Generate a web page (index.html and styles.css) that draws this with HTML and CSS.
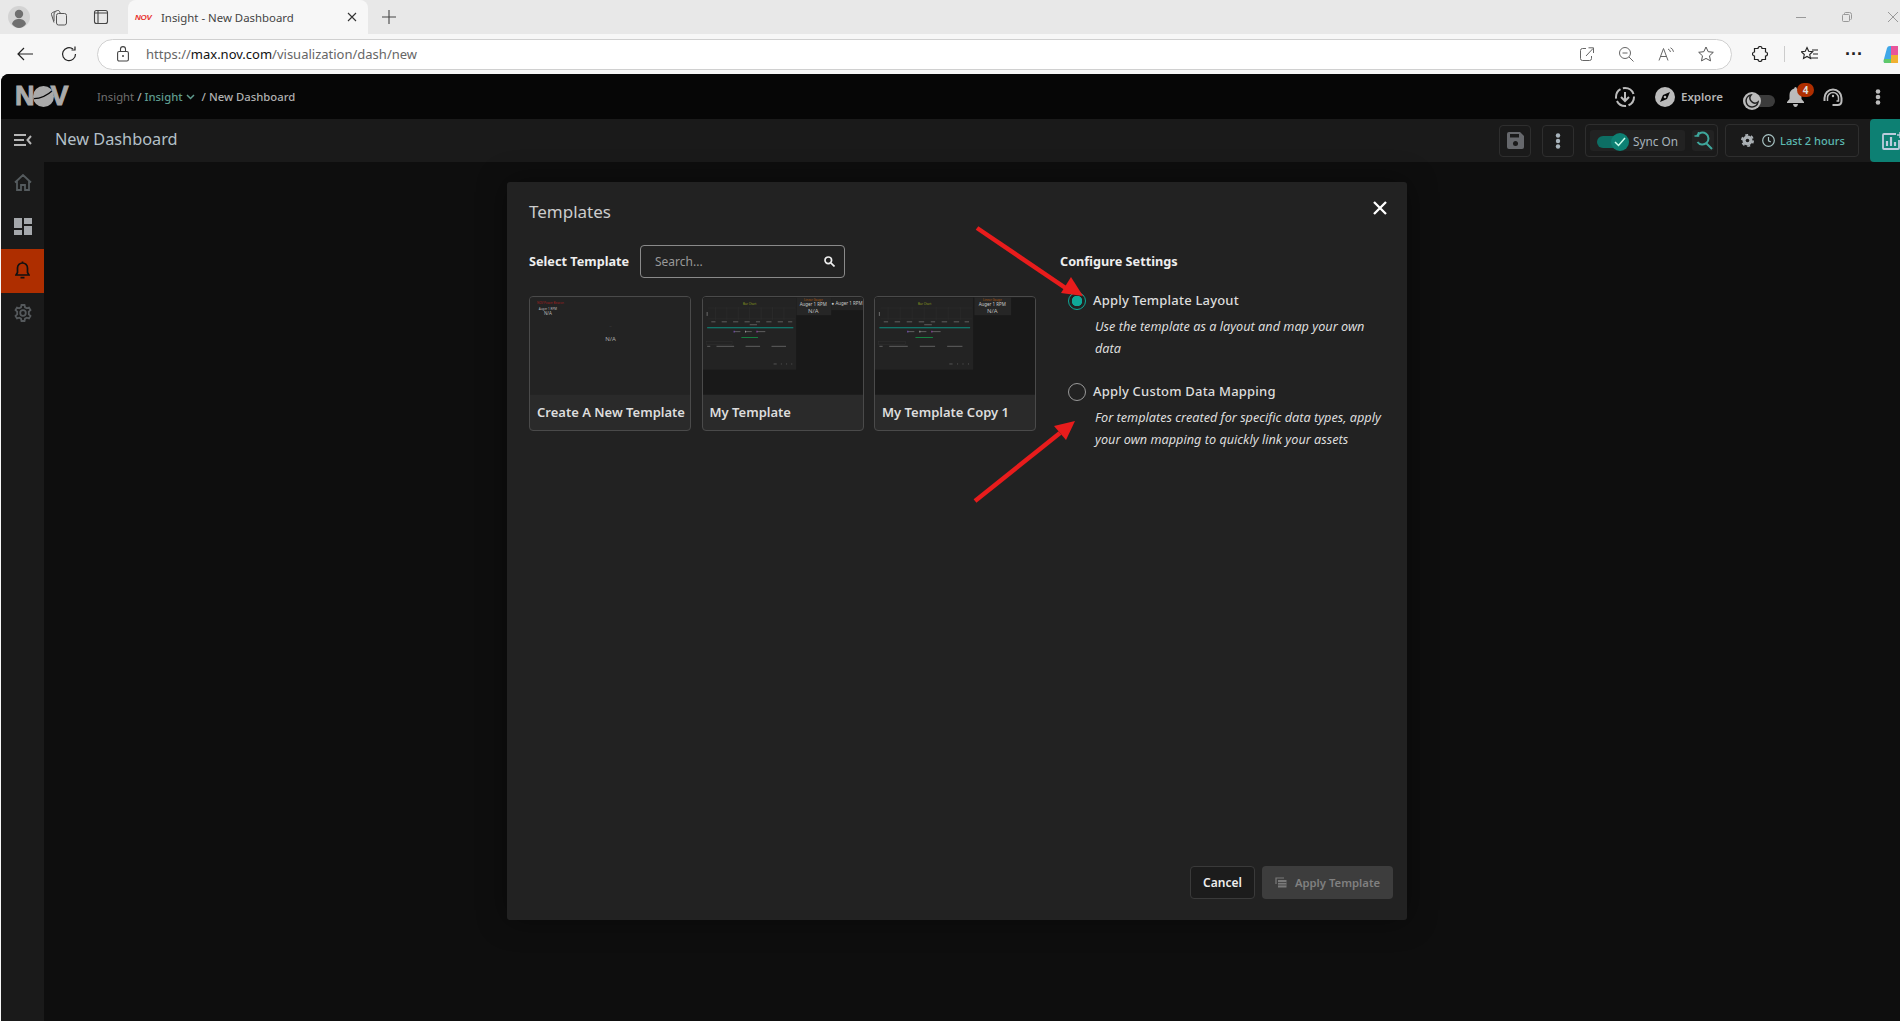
FILE: index.html
```html
<!DOCTYPE html>
<html lang="en">
<head>
    <meta charset="UTF-8">
    <title>Insight - New Dashboard</title>
    <link rel="stylesheet" href="styles.css">
</head>
<body>
    <svg class="defs" width="0" height="0">
        <symbol id="chart-panel" viewBox="0 0 90 74" preserveAspectRatio="none">
            <rect width="90" height="74" fill="#232323"/>
            <path d="M5 11H89M5 22H89M12 10V23M23 10V23M34 10V23M45 10V23M56 10V23M67 10V23M78 10V23" stroke="#2f2f2f" stroke-width=".5"/>
            <path d="M4 15V19" stroke="#888" stroke-width=".7"/>
            <path d="M8 25H12M18 25H23M29 25H34M40 25H45M51 25H55M61 25H66M72 25H77M82 25H86M45 28H52" stroke="#777" stroke-width=".7"/>
            <path d="M4 31H87" stroke="#0d8f80" stroke-width="1"/>
            <path d="M30 35H36M41 35H47M52 35H60" stroke="#777" stroke-width=".7"/>
            <path d="M30 34V36" stroke="#7a4fc0"/><path d="M41 34V36" stroke="#999"/><path d="M52 34V36" stroke="#9a40b0"/>
            <path d="M37 41H53" stroke="#168a45" stroke-width=".9"/>
            <rect x="3" y="45" width="25" height="3" fill="none" stroke="#333" stroke-width=".4"/>
            <path d="M4 50H7M13 50H30M41 50H55M66 50H80" stroke="#777" stroke-width=".7"/>
            <path d="M68 68H71M75 68H76M80 68H81M85 68H86" stroke="#666" stroke-width=".7"/>
        </symbol>
    </svg>

    <div class="tab-strip">
        <div class="strip-left">
            <span class="avatar">
                <svg width="22" height="22" viewBox="0 0 22 22"><circle cx="11" cy="11" r="11" fill="#d3d3d3"/><circle cx="11" cy="8" r="4.2" fill="#6f6f6f"/><path d="M4 18c1-4 4-5 7-5s6 1 7 5c-2 2.400-4.500 4-7 4s-5-1.600-7-4z" fill="#6f6f6f"/></svg>
            </span>
            <svg class="chrome-icon" width="18" height="18" viewBox="0 0 18 18" fill="none" stroke="#555"><rect x="6.500" y="5.500" width="10" height="11.500" rx="2"/><path d="M4 14.500 1.500 6.500q-.3-1.500 1-2l5-2q1.500-.4 2 1L10.500 5.500"/><path d="M4 13V6q0-1.500 1.500-2"/></svg>
            <svg class="chrome-icon" width="16" height="16" viewBox="0 0 16 16" fill="none" stroke="#444" stroke-width="1.100"><rect x="1.500" y="1.500" width="13" height="13" rx="2"/><path d="M5 2v12M2 4h12" /></svg>
        </div>
        <div class="tab">
            <span class="favicon">NOV</span>
            <span class="tab-title">Insight - New Dashboard</span>
            <svg width="10" height="10" viewBox="0 0 10 10" stroke="#333" stroke-width="1.100"><path d="M1 1l8 8M9 1l-8 8"/></svg>
        </div>
        <svg class="new-tab" width="14" height="14" viewBox="0 0 14 14" stroke="#444" stroke-width="1.100"><path d="M7 0v14M0 7h14"/></svg>
        <div class="window-btns">
            <svg width="10" height="10" viewBox="0 0 10 10" stroke="#999"><path d="M0 5.500h10"/></svg>
            <svg width="10" height="10" viewBox="0 0 10 10" fill="none" stroke="#999"><rect x=".5" y="2.500" width="7" height="7" rx="1"/><path d="M2.500 2V1.500q0-1 1-1h4q2 0 2 2v4q0 1-1 1"/></svg>
            <svg width="10" height="10" viewBox="0 0 10 10" stroke="#999"><path d="M0 0l10 10M10 0L0 10"/></svg>
        </div>
    </div>

    <div class="toolbar">
        <svg class="nav-back" width="16" height="14" viewBox="0 0 16 14" fill="none" stroke="#222" stroke-width="1.200"><path d="M16 7H1M7 1L1 7l6 6"/></svg>
        <svg class="nav-reload" width="16" height="16" viewBox="0 0 16 16" fill="none" stroke="#222" stroke-width="1.200"><path d="M14.500 8A6.500 6.500 0 1 1 12 3"/><path d="M14 .5V4h-3.500" /></svg>
        <div class="url-pill">
            <svg class="lock" width="12" height="16" viewBox="0 0 12 16" fill="none" stroke="#444" stroke-width="1.100"><rect x=".6" y="5.500" width="10.800" height="9.500" rx="1.500"/><path d="M3.500 5.500V3q0-2.400 2.500-2.400T8.500 3v2.500"/><circle cx="6" cy="10" r="1" fill="#444" stroke="none"/></svg>
            <span class="url"><span class="url-dim">https://</span>max.nov.com<span class="url-dim">/visualization/dash/new</span></span>
            <div class="url-icons">
                <svg width="14" height="14" viewBox="0 0 14 14" fill="none" stroke="#666"><path d="M6 1.500H2.500q-2 0-2 2v8q0 2 2 2h7q2 0 2-2V9"/><path d="M6 9l7-7.500M8.500.8H13.500V6"/></svg>
                <svg width="16" height="16" viewBox="0 0 16 16" fill="none" stroke="#666"><circle cx="7" cy="7" r="5.500"/><path d="M4.500 7h5M11 11l4.500 4.500"/></svg>
                <svg width="16" height="14" viewBox="0 0 16 14" fill="none" stroke="#666"><path d="M1 13.500L5.500 1.500 10 13.500M2.800 9.500h5.600M10 2q2 .8 2.500 3M12.500 .8q2.500 1 3 4"/></svg>
                <svg width="16" height="16" viewBox="0 0 16 16" fill="none" stroke="#555"><path d="M8 1l2.200 4.700 5.100.6-3.800 3.500 1 5.100L8 12.400l-4.500 2.500 1-5.100L.7 6.300l5.100-.6z"/></svg>
            </div>
        </div>
        <svg class="ext-icon" width="16" height="16" viewBox="0 0 16 16" fill="none" stroke="#222" stroke-width="1.200"><path d="M6 2.500a2 2 0 0 1 4 0H13.500V6a2 2 0 0 1 0 4v3.500H10a2 2 0 0 1-4 0H2.500V10a2 2 0 0 1 0-4V2.500z"/></svg>
        <span class="tool-sep"></span>
        <svg class="fav-icon" width="17" height="16" viewBox="0 0 17 16" fill="none" stroke="#222" stroke-width="1.100"><path d="M6 1.500l1.700 3.700 4 .5-3 2.800.8 4L6 10.500l-3.500 2 .8-4-3-2.800 4-.5zM11 4h6M12 8h5M10 12h7"/></svg>
        <span class="more-dots">···</span>
        <svg class="copilot" width="16" height="18" viewBox="0 0 16 18"><path d="M2 14L5 3q.5-2 3-2h8v17H3q-2 0-1-4z" fill="#3fa7e8"/><path d="M9 1h7v9H9z" fill="#e8559a"/><path d="M2 14h7v4H3q-2 0-1-4z" fill="#5fc96a"/><path d="M9 10h7v8H9z" fill="#f0b030"/></svg>
    </div>

    <div class="app">
        <header class="app-header">
            <div class="logo">
                <span>N</span>
                <svg width="21" height="21" viewBox="0 0 20 20"><circle cx="10" cy="10" r="10" fill="#aaa"/><path d="M1 12Q10 12 19 4" fill="none" stroke="#060606" stroke-width="1.200"/></svg>
                <span class="logo-v">V</span>
            </div>
            <nav class="breadcrumb">
                <span class="crumb-dim">Insight</span>
                <span>/</span>
                <span class="crumb-teal">Insight</span>
                <svg width="9" height="6" viewBox="0 0 9 6" fill="none" stroke="#5f9c8f" stroke-width="1.500"><path d="M1 1l3.500 3.500L8 1"/></svg>
                <span class="crumb-sep">/</span>
                <span>New Dashboard</span>
            </nav>
            <div class="header-right">
                <svg class="h-download" width="20" height="20" viewBox="0 0 20 20" fill="none" stroke="#bbb" stroke-width="2"><path d="M10 1a9 9 0 0 1 9 9 9 9 0 0 1-9 9 9 9 0 0 1-9-9 9 9 0 0 1 9-9z" stroke-dasharray="11 2.500"/><path d="M10 5v9M6 10l4 4 4-4"/></svg>
                <svg class="h-compass" width="20" height="20" viewBox="0 0 20 20"><circle cx="10" cy="10" r="10" fill="#bbb"/><path d="M15 5l-3 7-7 3 3-7z" fill="#060606"/><circle cx="10" cy="10" r="1.300" fill="#bbb"/></svg>
                <span class="explore">Explore</span>
                <div class="moon-toggle">
                    <span class="moon-knob">
                        <svg width="14" height="14" viewBox="0 0 14 14" fill="none" stroke="#222" stroke-width="1.500"><path d="M6 1a6 6 0 1 0 7 7 5 5 0 0 1-7-7z"/></svg>
                    </span>
                </div>
                <div class="bell-wrap">
                    <svg width="17" height="20" viewBox="0 0 17 20" fill="#bbb"><path d="M8.500 0q1.300 0 1.300 1.500C13 2.300 14.500 5 14.500 8v4l2.500 3v1H0v-1l2.500-3V8c0-3 1.500-5.700 4.700-6.500Q7.200 0 8.500 0zM6 17h5q-.5 3-2.500 3T6 17z"/></svg>
                    <span class="badge">4</span>
                </div>
                <svg class="h-headset" width="20" height="18" viewBox="0 0 20 18" fill="none" stroke="#bbb" stroke-width="2"><path d="M1.500 13V10a8.500 8.500 0 0 1 17 0v3q0 4-4 4h-5"/><path d="M4.500 13V10a5.500 5.500 0 0 1 11 0v3h-2" stroke-width="1.500"/><circle cx="10" cy="8" r="1.200" fill="#bbb" stroke="none"/></svg>
                <svg class="h-dots" width="6" height="16" viewBox="0 0 6 16" fill="#bbb"><circle cx="3" cy="2.500" r="2.300"/><circle cx="3" cy="8" r="2.300"/><circle cx="3" cy="13.500" r="2.300"/></svg>
            </div>
        </header>

        <div class="sub-header">
            <div class="menu-toggle">
                <svg width="18" height="12" viewBox="0 0 18 12" fill="none" stroke="#b5b5b5" stroke-width="2"><path d="M0 1h12M0 6h10M0 11h12M17 2l-3.500 4 3.500 4"/></svg>
            </div>
            <h2 class="page-title">New Dashboard</h2>
            <div class="sub-right">
                <button class="tool-btn btn-save">
                    <svg width="17" height="17" viewBox="0 0 17 17" fill="#66686c"><path d="M2 0h11l4 4v11q0 2-2 2H2q-2 0-2-2V2q0-2 2-2z"/><rect x="3" y="2" width="9" height="3.500" fill="#1a1a1a"/><circle cx="8.500" cy="11.500" r="2.500" fill="#1a1a1a"/></svg>
                </button>
                <button class="tool-btn btn-more">
                    <svg width="6" height="16" viewBox="0 0 6 16" fill="#a8b4bc"><circle cx="3" cy="2.500" r="2.200"/><circle cx="3" cy="8" r="2.200"/><circle cx="3" cy="13.500" r="2.200"/></svg>
                </button>
                <div class="sync-group">
                    <div class="sync-pill">
                        <div class="sync-toggle">
                            <span class="sync-knob">
                                <svg width="12" height="10" viewBox="0 0 12 10" fill="none" stroke="#cfe" stroke-width="1.500"><path d="M1 5l3.500 3.500L11 1"/></svg>
                            </span>
                        </div>
                        <span class="sync-label">Sync On</span>
                    </div>
                    <div class="sync-search">
                        <svg width="19" height="19" viewBox="0 0 19 19" fill="none" stroke="#3fa79c" stroke-width="2"><path d="M3 5a6 6 0 1 1 .500 6M12 12l6 6"/><path d="M.5 5H4.500V1" stroke-width="1.500"/></svg>
                    </div>
                </div>
                <div class="time-group">
                    <svg width="13" height="13" viewBox="0 0 13 13" fill="#aab0b4"><circle cx="6.500" cy="6.500" r="5"/><circle cx="6.500" cy="6.500" r="5.600" fill="none" stroke="#aab0b4" stroke-width="1.800" stroke-dasharray="2.900 2.960"/><circle cx="6.500" cy="6.500" r="1.800" fill="#1a1a1a"/></svg>
                    <svg class="clock" width="13" height="13" viewBox="0 0 13 13" fill="none" stroke="#a8c4c4" stroke-width="1.200"><circle cx="6.500" cy="6.500" r="5.800"/><path d="M6.500 3v3.800l2.300 1.200"/></svg>
                    <span class="time-label">Last 2 hours</span>
                </div>
                <button class="chart-btn">
                    <svg width="20" height="18" viewBox="0 0 20 18" fill="none" stroke="#bcd" stroke-width="1.800"><path d="M14 2H2q-1 0-1 1v13q0 1 1 1h14q1 0 1-1V8"/><path d="M5 14V9M9 14V5M13 14v-4" stroke-width="2.200"/><path d="M18 0v6M15 3h5" stroke-width="1.500"/></svg>
                </button>
            </div>
        </div>

        <div class="app-body">
            <aside class="sidebar">
                <div class="side-item">
                    <svg width="18" height="17" viewBox="0 0 18 17" fill="none" stroke="#555b5e" stroke-width="1.800"><path d="M1 8.500L9 1l8 7.500M3 7v9h4v-5h4v5h4V7"/></svg>
                </div>
                <div class="side-item">
                    <svg width="18" height="17" viewBox="0 0 18 17"><path d="M0 0h8v10H0z" fill="#a5a8ac"/><path d="M10 0h8v6h-8z" fill="#a5a8ac"/><path d="M0 12h8v5H0z" fill="#a5a8ac"/><path d="M10 8h8v9h-8z" fill="#a5a8ac"/></svg>
                </div>
                <div class="side-item active">
                    <svg width="15" height="18" viewBox="0 0 15 18" fill="none" stroke="#111" stroke-width="1.700"><path d="M1 14h13l-1.500-2.500V7A5 5 0 0 0 2.500 7v4.500zM7.500 .5v1.500M5.500 16.700h4"/></svg>
                </div>
                <div class="side-item">
                    <svg width="18" height="18" viewBox="0 0 18 18" fill="none" stroke="#55595c" stroke-width="1.800"><circle cx="9" cy="9" r="2.800"/><path d="M7.500 1h3l.5 2.300 1.800 1 2.200-.8 1.500 2.600-1.700 1.600v2.600l1.700 1.600-1.500 2.600-2.200-.8-1.800 1-.5 2.300h-3L7 14.700l-1.800-1-2.200.8-1.500-2.600 1.700-1.600V7.700L1.500 6.100 3 3.500l2.200.8 1.800-1z"/></svg>
                </div>
            </aside>
            <main class="canvas"></main>
        </div>

        <section class="modal">
            <div class="modal-head">
                <h3 class="modal-title">Templates</h3>
                <svg class="modal-close" width="14" height="14" viewBox="0 0 14 14" stroke="#fff" stroke-width="2.300"><path d="M1 1l12 12M13 1L1 13"/></svg>
            </div>
            <div class="modal-content">
                <div class="select-col">
                    <div class="select-row">
                        <label class="select-label">Select Template</label>
                        <div class="search-box">
                            <span class="search-ph">Search...</span>
                            <svg width="11" height="11" viewBox="0 0 11 11" fill="none" stroke="#eee" stroke-width="1.700"><circle cx="4.300" cy="4.300" r="3.300"/><path d="M6.800 6.800L10.500 10.500"/></svg>
                        </div>
                    </div>
                    <div class="card-grid">
                        <div class="card">
                            <svg class="thumb" viewBox="0 0 161 98">
                                <rect width="161" height="98" fill="#232323"/>
                                <text x="7" y="7" class="t-tiny" fill="#a02020">NOV Power Beacon</text>
                                <text x="18" y="13" class="t-tiny" fill="#bbb" text-anchor="middle">Auger 1 RPM</text>
                                <text x="18" y="18" class="t-small" fill="#bbb" text-anchor="middle">N/A</text>
                                <text x="81" y="30" class="t-tiny" fill="#666" text-anchor="middle">--</text>
                                <text x="81" y="44" class="t-mid" fill="#aaa" text-anchor="middle">N/A</text>
                            </svg>
                            <div class="card-name">Create A New Template</div>
                        </div>
                        <div class="card">
                            <svg class="thumb" viewBox="0 0 161 98">
                                <rect width="161" height="98" fill="#191919"/>
                                <use href="#chart-panel" width="94" height="73"/>
                                <text x="47" y="8" class="t-tiny" fill="#8a9a20" text-anchor="middle">Bar Chart</text>
                                <rect x="94" width="35" height="18" fill="#262626"/>
                                <rect x="129" width="32" height="13" fill="#232323"/>
                                <text x="111" y="4" class="t-tiny" fill="#b05a10" text-anchor="middle">Linear Gauge</text>
                                <text x="111" y="9" class="t-small" fill="#ccc" text-anchor="middle">Auger 1 RPM</text>
                                <text x="111" y="16" class="t-mid" fill="#bbb" text-anchor="middle">N/A</text>
                                <text x="145" y="8" class="t-small" fill="#ccc" text-anchor="middle">● Auger 1 RPM</text>
                            </svg>
                            <div class="card-name">My Template</div>
                        </div>
                        <div class="card">
                            <svg class="thumb" viewBox="0 0 161 98">
                                <rect width="161" height="98" fill="#191919"/>
                                <use href="#chart-panel" width="99" height="73"/>
                                <text x="50" y="8" class="t-tiny" fill="#8a9a20" text-anchor="middle">Bar Chart</text>
                                <rect x="100" width="37" height="18" fill="#262626"/>
                                <text x="118" y="4" class="t-tiny" fill="#b05a10" text-anchor="middle">Linear Gauge</text>
                                <text x="118" y="9" class="t-small" fill="#ccc" text-anchor="middle">Auger 1 RPM</text>
                                <text x="118" y="16" class="t-mid" fill="#bbb" text-anchor="middle">N/A</text>
                            </svg>
                            <div class="card-name">My Template Copy 1</div>
                        </div>
                    </div>
                </div>
                <div class="config-col">
                    <h4 class="config-title">Configure Settings</h4>
                    <div class="option">
                        <span class="radio checked"></span>
                        <span class="option-label">Apply Template Layout</span>
                    </div>
                    <p class="option-desc">Use the template as a layout and map your own data</p>
                    <div class="option">
                        <span class="radio"></span>
                        <span class="option-label">Apply Custom Data Mapping</span>
                    </div>
                    <p class="option-desc">For templates created for specific data types, apply your own mapping to quickly link your assets</p>
                </div>
            </div>
            <div class="modal-foot">
                <button class="btn-cancel">Cancel</button>
                <button class="btn-apply">
                    <svg width="12" height="11" viewBox="0 0 12 11" fill="none" stroke="#7a7a7a" stroke-width="1.200"><path d="M1 7V1h8"/><rect x="3" y="3" width="8.500" height="7.500" fill="#7a7a7a" stroke="none"/><path d="M3 5.500h8.500M3 8h8.500" stroke="#3d3d3d" stroke-width=".8"/></svg>
                    Apply Template
                </button>
            </div>
        </section>
    </div>

    <!-- annotation arrows, page coordinates -->
    <svg class="arrows" width="1900" height="1021" viewBox="0 0 1900 1021">
        <path d="M977 228L1070 291" stroke="#e81c1c" stroke-width="4.500" fill="none"/>
        <path d="M1083 296L1071 277 1061 293z" fill="#e81c1c"/>
        <path d="M975 501L1060 433" stroke="#e81c1c" stroke-width="4.500" fill="none"/>
        <path d="M1075 421L1054 426 1066 440z" fill="#e81c1c"/>
    </svg>
</body>
</html>
```

FILE: styles.css
```css
* {
    box-sizing: border-box;
}
html, body {
    margin: 0;
    padding: 0;
    height: 1021px;
    overflow: hidden;
}
body {
    font-family: "Noto Sans", sans-serif;
    background-color: #f7f7f7;
    position: relative;
}
h2, h3, h4, p {
    margin: 0;
    font-weight: normal;
}
button {
    font-family: inherit;
    cursor: pointer;
}
svg {
    display: block;
    flex-shrink: 0;
}
.defs {
    position: absolute;
}

/* browser chrome */
.tab-strip {
    height: 34px;
    background-color: #e8e8e8;
    display: flex;
    align-items: center;
}
.strip-left {
    width: 128px;
    display: flex;
    align-items: center;
    padding-left: 8px;
}
.avatar {
    margin-right: 20px;
}
.strip-left .chrome-icon:nth-child(2) {
    margin-right: 25px;
}
.tab {
    width: 240px;
    height: 34px;
    background-color: #f7f7f7;
    border-radius: 8px 8px 0 0;
    display: flex;
    align-items: center;
    padding: 0 11px 0 7px;
}
.favicon {
    width: 18px;
    margin-right: 8px;
    font: italic 900 8px "Liberation Sans", sans-serif;
    color: #e8302a;
    letter-spacing: -0.3px;
}
.tab-title {
    flex: 1;
    font-size: 11.400px;
    color: #444;
}
.new-tab {
    margin-left: 14px;
}
.window-btns {
    margin-left: auto;
    display: flex;
    align-items: center;
    gap: 36px;
    margin-right: 2px;
}
.toolbar {
    height: 40px;
    display: flex;
    align-items: center;
    background-color: #f7f7f7;
    padding-left: 17px;
}
.nav-back {
    margin-right: 28px;
}
.nav-reload {
    margin-right: 20px;
}
.url-pill {
    width: 1635px;
    height: 31px;
    background-color: #fff;
    border: 1px solid #d0d0d0;
    border-radius: 16px;
    display: flex;
    align-items: center;
    padding-left: 19px;
    flex-shrink: 0;
}
.lock {
    margin-right: 17px;
}
.url {
    font-size: 13px;
    color: #111;
}
.url-dim {
    color: #666;
}
.url-icons {
    margin-left: auto;
    display: flex;
    align-items: center;
    gap: 24px;
    padding-right: 17px;
}
.ext-icon {
    margin-left: 20px;
}
.tool-sep {
    width: 1px;
    height: 16px;
    background-color: #ccc;
    margin: 0 16px;
}
.more-dots {
    margin-left: 27px;
    font: bold 18px "Liberation Sans", sans-serif;
    color: #222;
    letter-spacing: 0;
}
.copilot {
    margin-left: 19px;
}

/* app shell */
.app {
    height: 947px;
    position: relative;
    margin-left: 1px;
    border-radius: 8px 0 0 0;
    background-color: #0e0e0e;
    overflow: hidden;
    display: flex;
    flex-direction: column;
}
.app-header {
    height: 45px;
    background-color: #060606;
    display: flex;
    align-items: center;
    padding-left: 14px;
    flex-shrink: 0;
}
.logo {
    width: 82px;
    display: flex;
    align-items: center;
    font: 900 27px "Liberation Sans", sans-serif;
    color: #aaa;
    letter-spacing: -1px;
    -webkit-text-stroke: 1px #aaa;
}
.logo svg {
    margin-left: -1px;
}
.logo-v {
    margin-left: -3px;
}
.breadcrumb {
    display: flex;
    align-items: center;
    gap: 3px;
    font-size: 11.300px;
    font-weight: 500;
    color: #b0b0b0;
}
.crumb-dim {
    color: #6f6f6f;
    font-weight: 400;
}
.crumb-teal {
    color: #5f9c8f;
}
.crumb-sep {
    margin-left: 4px;
}
.header-right {
    margin-left: auto;
    display: flex;
    align-items: center;
}
.h-download {
    margin-right: 20px;
}
.explore {
    margin-left: 6px;
    font-size: 11.500px;
    font-weight: 600;
    color: #b5b5b5;
    width: 62px;
}
.moon-toggle {
    width: 32px;
    height: 12px;
    margin-top: 8px;
    border-radius: 6px;
    background-color: #3b3b3b;
    display: flex;
    align-items: center;
    margin-right: 12px;
}
.moon-knob {
    width: 18px;
    height: 18px;
    border-radius: 50%;
    background-color: #bbb;
    display: flex;
    align-items: center;
    justify-content: center;
}
.bell-wrap {
    position: relative;
    margin-right: 19px;
}
.badge {
    position: absolute;
    top: -4px;
    left: 10px;
    width: 17px;
    height: 14px;
    border-radius: 7px;
    background-color: #ae2e00;
    color: #ddd;
    font-size: 10px;
    font-weight: 700;
    line-height: 14px;
    text-align: center;
}
.h-headset {
    margin-right: 32px;
}
.h-dots {
    margin-right: 19px;
}

.sub-header {
    height: 43px;
    background-color: #1a1a1a;
    display: flex;
    align-items: center;
    flex-shrink: 0;
}
.menu-toggle {
    width: 44px;
    padding-left: 13px;
    padding-bottom: 2px;
}
.page-title {
    margin-left: 10px;
    padding-bottom: 3px;
    font-size: 16.300px;
    color: #b4c0c8;
}
.sub-right {
    margin-left: auto;
    display: flex;
    align-items: center;
    height: 43px;
}
.tool-btn {
    width: 32px;
    height: 32px;
    background: transparent;
    border: 1px solid #2e2e2e;
    border-radius: 4px;
    display: flex;
    align-items: center;
    justify-content: center;
    padding: 0;
    margin-right: 11px;
}
.sync-group {
    width: 133px;
    height: 33px;
    border: 1px solid #2e2e2e;
    border-radius: 4px;
    display: flex;
    align-items: center;
    padding-left: 4px;
    gap: 7px;
    margin-right: 7px;
}
.sync-pill {
    width: 95px;
    height: 21px;
    background-color: #222;
    border-radius: 3px;
    display: flex;
    align-items: center;
    padding-left: 7px;
}
.sync-toggle {
    width: 28px;
    height: 12px;
    margin-top: 2px;
    border-radius: 6px;
    background-color: #0d6e64;
    display: flex;
    align-items: center;
    justify-content: flex-end;
    flex-shrink: 0;
}
.sync-knob {
    width: 18px;
    height: 18px;
    border-radius: 50%;
    background-color: #0d8073;
    display: flex;
    align-items: center;
    justify-content: center;
    margin-right: -4px;
    flex-shrink: 0;
}
.sync-label {
    margin-left: 8px;
    font-size: 11.800px;
    color: #a8b4bc;
    white-space: nowrap;
}
.sync-search {
    width: 22px;
    height: 21px;
    background-color: #222;
    border-radius: 3px;
    display: flex;
    align-items: center;
    justify-content: center;
}
.time-group {
    width: 134px;
    height: 33px;
    border: 1px solid #2e2e2e;
    border-radius: 4px;
    display: flex;
    align-items: center;
    padding-left: 15px;
    margin-right: 11px;
}
.clock {
    margin-left: 8px;
}
.time-label {
    margin-left: 5px;
    font-size: 11.100px;
    font-weight: 500;
    color: #5cb8b0;
    white-space: nowrap;
}
.chart-btn {
    width: 30px;
    height: 43px;
    background-color: #0d8073;
    border: none;
    border-radius: 4px 0 0 4px;
    padding: 0 0 0 12px;
    overflow: hidden;
}
.app-body {
    flex: 1;
    display: flex;
}
.sidebar {
    width: 43px;
    background-color: #1a1a1a;
    flex-shrink: 0;
}
.side-item {
    height: 43.500px;
    padding-bottom: 2px;
    display: flex;
    align-items: center;
    justify-content: center;
}
.side-item.active {
    background-color: #ae2e00;
}
.canvas {
    flex: 1;
    background-color: #0e0e0e;
}

/* modal */
.modal {
    position: absolute;
    left: 506px;
    top: 108px;
    width: 900px;
    height: 738px;
    background-color: #222;
    border-radius: 3px;
    padding: 0 22px 21px;
    display: flex;
    flex-direction: column;
    box-shadow: 0 0 30px rgba(0, 0, 0, 0.4);
}
.modal-head {
    height: 50px;
    display: flex;
    align-items: center;
    justify-content: space-between;
    padding-top: 8px;
    padding-right: 0;
}
.modal-head .modal-close {
    margin-top: -6px;
    margin-right: -2px;
}
.modal-title {
    font-size: 17px;
    color: #ccc;
}
.modal-content {
    flex: 1;
    display: flex;
    padding-top: 13px;
}
.select-col {
    width: 532px;
    flex-shrink: 0;
}
.select-row {
    display: flex;
    align-items: center;
    height: 32px;
}
.select-label {
    width: 111px;
    font-size: 12.700px;
    font-weight: 700;
    color: #eee;
    white-space: nowrap;
}
.search-box {
    width: 205px;
    height: 33px;
    border: 1px solid #8a8a8a;
    border-radius: 4px;
    display: flex;
    align-items: center;
    justify-content: space-between;
    padding: 0 9px 0 14px;
}
.search-ph {
    font-size: 12px;
    color: #999;
}
.card-grid {
    display: grid;
    grid-template-columns: repeat(3, 162px);
    column-gap: 10.500px;
    margin-top: 19px;
}
.card {
    height: 135px;
    border: 1px solid #4a4a4a;
    border-radius: 4px;
    background-color: #2a2a2a;
    overflow: hidden;
}
.thumb {
    width: 160px;
    height: 98px;
}
.card-name {
    height: 35px;
    line-height: 35px;
    padding-left: 7px;
    font-size: 13px;
    font-weight: 600;
    color: #ddd;
    white-space: nowrap;
}
.t-tiny {
    font: 3px "Noto Sans", sans-serif;
}
.t-small {
    font: 4.500px "Noto Sans", sans-serif;
}
.t-mid {
    font: 6px "Noto Sans", sans-serif;
}
.config-col {
    flex: 1;
    padding-top: 7px;
}
.config-title {
    margin-left: -1px;
    font-size: 12.700px;
    font-weight: 700;
    color: #eee;
    line-height: 18px;
}
.option {
    display: flex;
    align-items: center;
    gap: 7px;
    margin-top: 22px;
    padding-left: 7px;
}
.option-desc + .option {
    margin-top: 23.500px;
}
.radio {
    width: 18px;
    height: 18px;
    border: 1px solid #999;
    border-radius: 50%;
    flex-shrink: 0;
}
.radio.checked {
    border-color: #0fa898;
    background: radial-gradient(circle, #0fa898 0 5px, transparent 5.500px);
}
.option-label {
    font-size: 13px;
    font-weight: 500;
    color: #ddd;
    letter-spacing: 0.2px;
    margin-top: -2px;
}
.option-desc {
    margin-top: 5px;
    padding-left: 34px;
    font-size: 12.700px;
    font-style: italic;
    color: #ddd;
    line-height: 22px;
}
.modal-foot {
    display: flex;
    justify-content: flex-end;
    gap: 7px;
    margin-right: -8px;
}
.btn-cancel {
    width: 65px;
    height: 33px;
    background-color: #1c1c1c;
    border: 1px solid #3a3a3a;
    border-radius: 4px;
    color: #eee;
    font-size: 12px;
    font-weight: 600;
}
.btn-apply {
    width: 131px;
    height: 33px;
    background-color: #3d3d3d;
    border: none;
    border-radius: 4px;
    color: #808080;
    font-size: 11.300px;
    font-weight: 600;
    display: flex;
    align-items: center;
    justify-content: center;
    gap: 8px;
}
.arrows {
    position: absolute;
    left: 0;
    top: 0;
    pointer-events: none;
}
```
